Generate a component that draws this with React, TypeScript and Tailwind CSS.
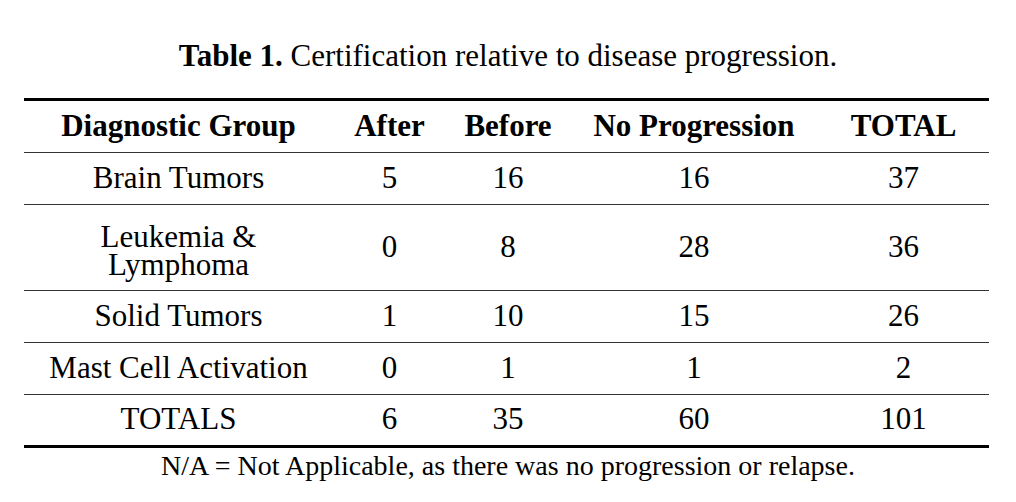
const rows = [
    { group: ['Brain Tumors'], after: '5', before: '16', none: '16', total: '37' },
    { group: ['Leukemia &', 'Lymphoma'], after: '0', before: '8', none: '28', total: '36' },
    { group: ['Solid Tumors'], after: '1', before: '10', none: '15', total: '26' },
    { group: ['Mast Cell Activation'], after: '0', before: '1', none: '1', total: '2' },
];

const cols = 'grid grid-cols-[309px_113px_124px_248px_171px]';

const App = () => {
    return (
        <div className="w-[1016px] h-[502px] bg-white text-black font-['Liberation_Serif',serif] overflow-hidden">
            <p className="pt-[38px] text-center text-[31px] leading-[36px]">
                <span className="font-bold">Table 1.</span> Certification relative to disease progression.
            </p>
            <div className="mt-[24px] mx-[24px] w-[965px] border-y-[3px] border-black text-[31px] leading-[36px]">
                <div className={`${cols} h-[52px] border-b border-[#333] font-bold items-center text-center pb-[2px]`}>
                    <div>Diagnostic Group</div>
                    <div>After</div>
                    <div>Before</div>
                    <div>No Progression</div>
                    <div>TOTAL</div>
                </div>
                {rows.map((row) => {
                    const tall = row.group.length > 1;
                    return (
                        <div
                            key={row.group.join(' ')}
                            className={`${cols} ${tall ? 'h-[86px]' : 'h-[52px]'} border-b border-[#333] items-center text-center pb-[2px]`}
                        >
                            <div className={tall ? 'self-start pt-[18px] leading-[28px]' : ''}>
                                {row.group.map((line) => (
                                    <div key={line}>{line}</div>
                                ))}
                            </div>
                            <div>{row.after}</div>
                            <div>{row.before}</div>
                            <div>{row.none}</div>
                            <div>{row.total}</div>
                        </div>
                    );
                })}
                <div className={`${cols} h-[50px] items-center text-center pb-[2px]`}>
                    <div>TOTALS</div>
                    <div>6</div>
                    <div>35</div>
                    <div>60</div>
                    <div>101</div>
                </div>
            </div>
            <p className="mt-[2px] text-center text-[28px] leading-[32px]">
                N/A = Not Applicable, as there was no progression or relapse.
            </p>
        </div>
    );
};

export default App;
